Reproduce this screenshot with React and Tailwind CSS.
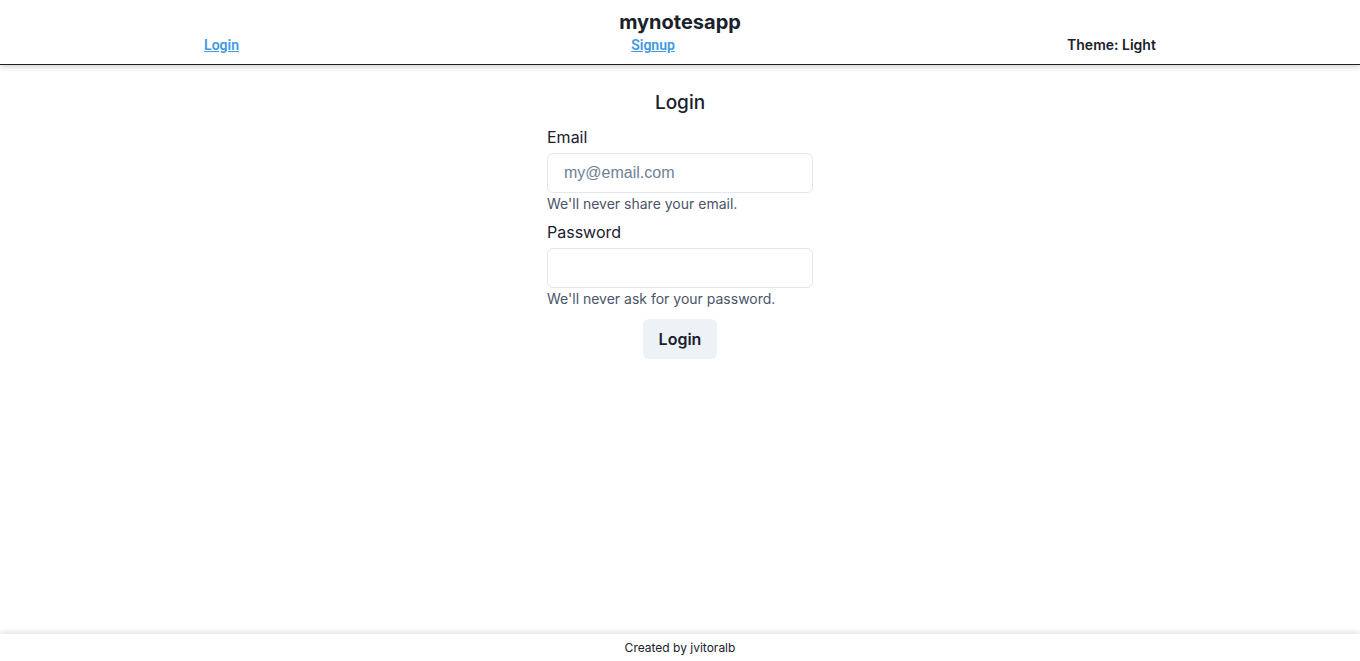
import React from 'react';

export default function App() {
  return (
    <div className="min-h-screen flex flex-col bg-white text-[#1a202c]" style={{ fontFamily: 'Inter, "Noto Sans", sans-serif' }}>
      <header className="h-[65px] shrink-0 border-b border-[#1a202c] shadow-[0_2px_6px_rgba(0,0,0,0.18)] flex flex-col items-center">
        <h1 className="text-xl font-bold leading-6 mt-[10px]">mynotesapp</h1>
        <nav className="w-full flex justify-around px-2 text-sm font-semibold leading-5 mt-[1px]">
          <a href="#" className="text-[#4299e1] underline" style={{ fontFamily: 'Roboto, sans-serif' }}>Login</a>
          <a href="#" className="text-[#4299e1] underline" style={{ fontFamily: 'Roboto, sans-serif' }}>Signup</a>
          <span>Theme: Light</span>
        </nav>
      </header>

      <main className="flex-1 flex justify-center">
        <form className="w-[266px] flex flex-col mt-[23px]" onSubmit={(e) => e.preventDefault()}>
          <h2 className="text-[19px] font-medium text-center leading-7 pt-[1px] -mb-[1px]">Login</h2>
          <label className="mt-[9px] text-base leading-6">Email</label>
          <input
            type="email"
            placeholder="my@email.com"
            className="mt-1 h-10 px-4 rounded-md border border-[#e2e8f0] text-base placeholder:text-[#718096] outline-none"
            style={{ fontFamily: '"Liberation Sans", Arial, sans-serif' }}
          />
          <p className="mt-[1px] text-sm leading-5 text-[#4a5568]">We'll never share your email.</p>
          <label className="mt-[6px] text-base leading-6">Password</label>
          <input
            type="password"
            className="mt-1 h-10 px-4 rounded-md border border-[#e2e8f0] text-base outline-none"
          />
          <p className="mt-[1px] text-sm leading-5 text-[#4a5568]">We'll never ask for your password.</p>
          <div className="flex justify-center mt-[10px]">
            <button type="submit" className="h-10 px-4 rounded-md bg-[#edf2f7] font-semibold text-base">Login</button>
          </div>
        </form>
      </main>

      <footer className="h-[27px] shrink-0 shadow-[0_-2px_6px_rgba(0,0,0,0.12)] flex items-center justify-center text-xs text-[#1a202c]">
        Created by jvitoralb
      </footer>
    </div>
  );
}
